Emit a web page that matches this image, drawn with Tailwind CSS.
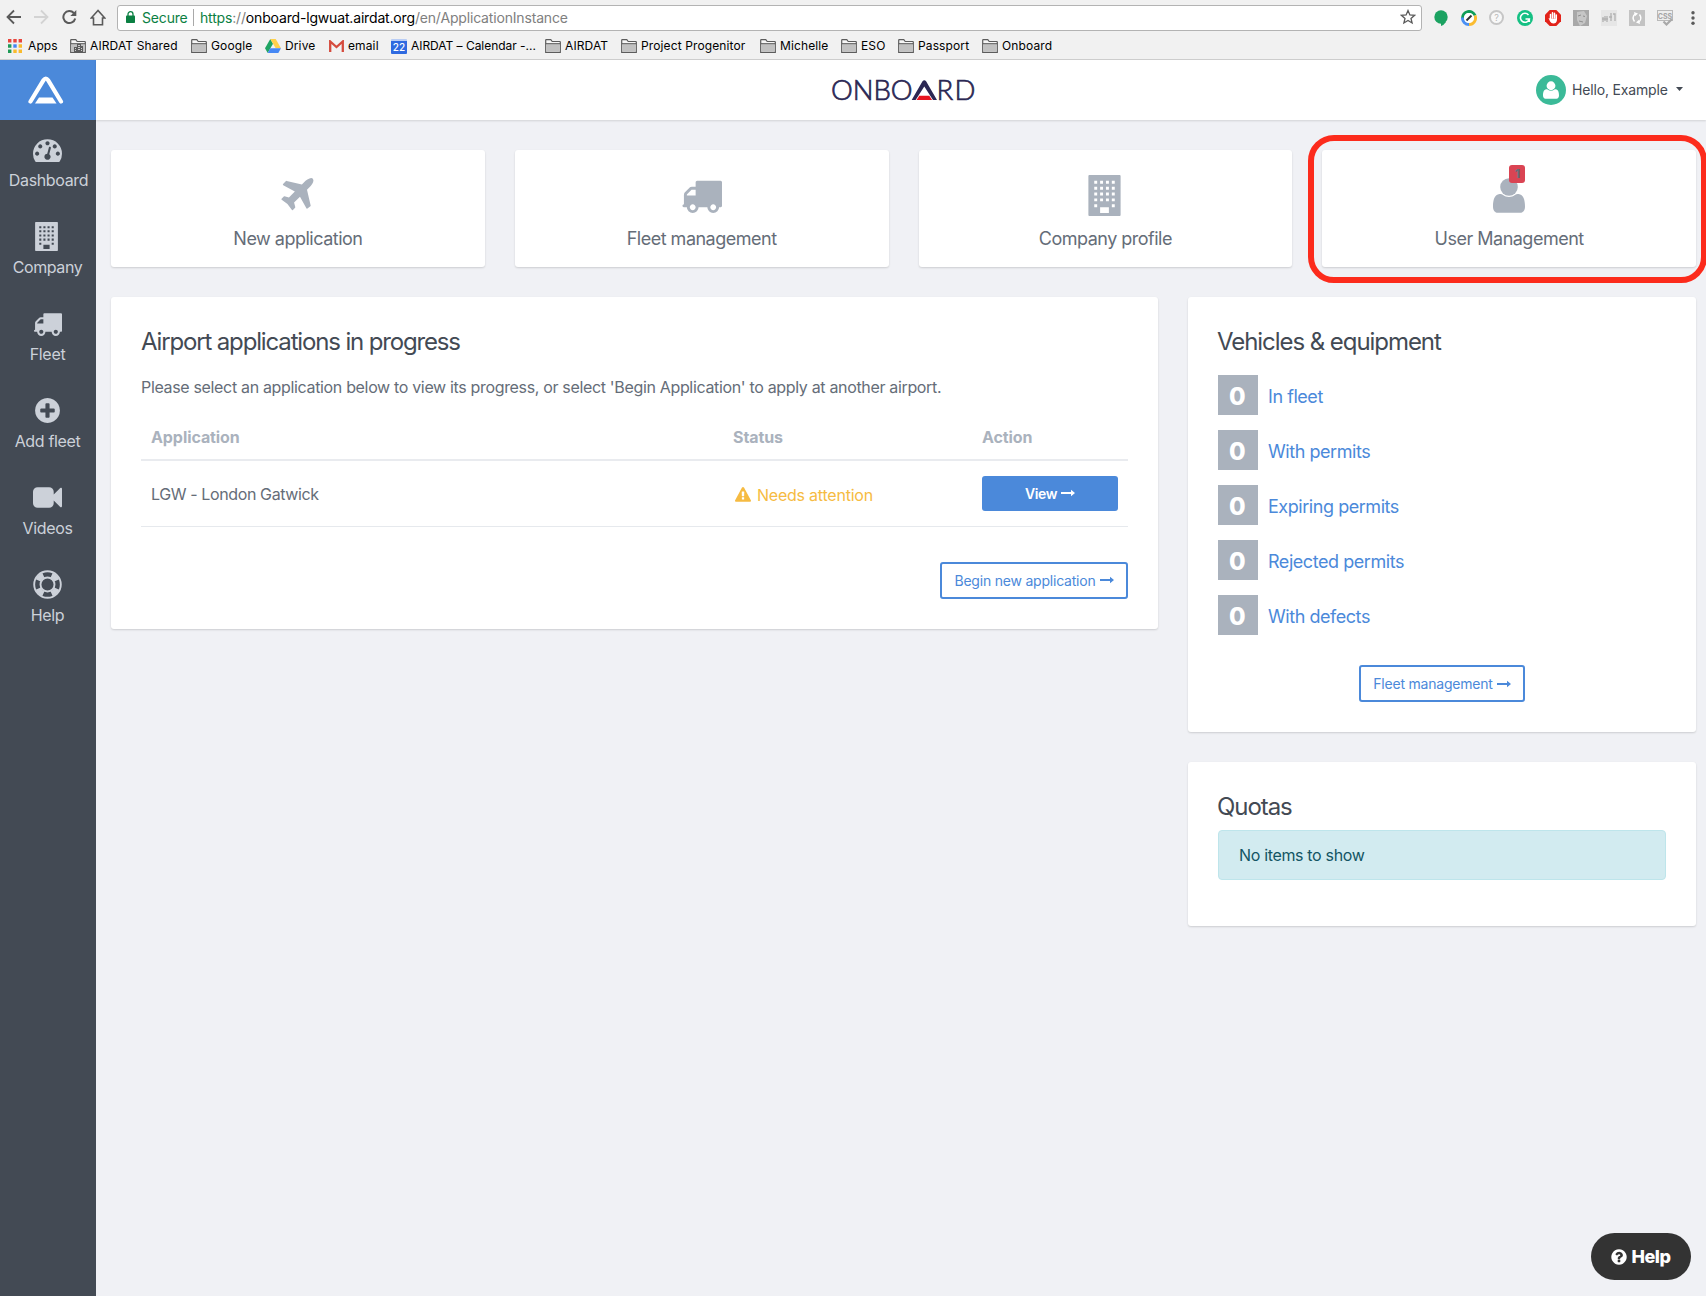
<!DOCTYPE html>
<html lang="en">

<head>
    <meta charset="UTF-8" />
    <meta name="viewport" content="width=device-width, initial-scale=1.0" />
    <title>Onboard</title>
    <script src="https://cdn.jsdelivr.net/npm/@tailwindcss/browser@4"></script>
</head>

<body class="h-[1296px] w-[1706px] overflow-hidden bg-[#f0f1f5] font-['Inter',sans-serif] text-base text-[#656d78]">
    <!-- Shared icons -->
    <svg class="hidden">
        <symbol id="folder" viewBox="0 0 16 14">
            <path d="M.7 13.3V1.2q0-.5.5-.5h4.6l1.4 1.8h7.6q.5 0 .5.5v10.3z" fill="#f6f6f6" stroke="#5c5c5c" stroke-width="1.2" />
            <path d="M1.3 5.2h13.4v7.5H1.3z" fill="#c1c1c1" />
            <path d="M.7 4.7h14.6" stroke="#5c5c5c" stroke-width="1.1" />
        </symbol>
        <symbol id="building" viewBox="0 0 33 42">
            <path fill="currentColor" fill-rule="evenodd" d="M1 0h31q1 0 1 1v40q0 1-1 1H1q-1 0-1-1V1q0-1 1-1zM6 6v3h3V6zM12 6v3h3V6zM18 6v3h3V6zM24 6v3h3V6zM6 12v3h3v-3zM12 12v3h3v-3zM18 12v3h3v-3zM24 12v3h3v-3zM6 18v3h3v-3zM12 18v3h3v-3zM18 18v3h3v-3zM24 18v3h3v-3zM6 24v3h3v-3zM12 24v3h3v-3zM18 24v3h3v-3zM24 24v3h3v-3zM6 30v3h3v-3zM24 30v3h3v-3zM12 33v6h9v-6z" />
        </symbol>
        <symbol id="truck" viewBox="0 0 1792 1792">
            <path fill="currentColor" d="M640 1408q0-52-38-90t-90-38-90 38-38 90 38 90 90 38 90-38 38-90zm-384-512h384v-256h-158q-13 0-22 9l-195 195q-9 9-9 22v30zm1280 512q0-52-38-90t-90-38-90 38-38 90 38 90 90 38 90-38 38-90zm256-1088v1024q0 15-4 26.5t-13.5 18.5-16.5 11.5-23.5 6-22.5 2-25.5 0-22.5-.5q0 106-75 181t-181 75-181-75-75-181h-384q0 106-75 181t-181 75-181-75-75-181h-64q-3 0-22.5.5t-25.5 0-22.5-2-23.5-6-16.5-11.5-13.5-18.5-4-26.5q0-26 19-45t45-19v-320q0-8-.5-35t0-38 2.5-34.5 6.5-37 14-30.5 22.5-30l198-198q19-19 50.5-32t58.5-13h160v-192q0-26 19-45t45-19h1024q26 0 45 19t19 45z" />
        </symbol>
        <symbol id="user" viewBox="0 0 32 35">
            <circle cx="16" cy="9" r="8.8" fill="currentColor" />
            <path fill="currentColor" d="M6.5 16C1.5 16.5 0 22 0 28.5C0 32.5 2 34.8 5 34.8H27C30 34.8 32 32.5 32 28.5C32 22 30.5 16.5 25.5 16C24 15.9 23.2 16 22.3 16.8C18.5 19.7 13.5 19.7 9.7 16.8C8.8 16 8 15.9 6.5 16Z" />
        </symbol>
        <symbol id="arrow" viewBox="0 0 14 8">
            <path fill="currentColor" d="M0 3.1h10V.8L14 4l-4 3.2V4.9H0z" />
        </symbol>
    </svg>

    <!-- Browser chrome -->
    <div class="h-[60px] border-b border-[#cfcfcf] bg-[#f1f1f1] text-black">
        <div class="flex h-[35px] items-center pl-[6px] pt-px">
            <div class="flex w-[111px] items-center gap-[13px] pb-0.5">
                <svg class="h-4 w-[15px]" viewBox="0 0 15 16" fill="none" stroke="#5a5a5a" stroke-width="1.8"><path d="M15 8H1.5M8 1.5L1.5 8L8 14.5" /></svg>
                <svg class="h-4 w-[15px]" viewBox="0 0 15 16" fill="none" stroke="#d3d3d3" stroke-width="1.8"><path d="M0 8H13.5M7 1.5L13.5 8L7 14.5" /></svg>
                <svg class="h-4 w-[15px]" viewBox="0 0 15 16"><path d="M13.2 9.5A6 6 0 1 1 11.8 4" fill="none" stroke="#5a5a5a" stroke-width="2" /><path d="M14.3 1v6H8.3z" fill="#5a5a5a" /></svg>
                <svg class="h-[17px] w-4" viewBox="0 0 16 17" fill="none" stroke="#5a5a5a" stroke-width="1.6"><path d="M8 1.5L1.2 9H3.5V15.7H12.5V9H14.8Z" /></svg>
            </div>
            <div class="flex h-[26px] w-[1305px] items-center rounded-[3px] border border-[#b3b3b3] bg-white pb-0.5 pl-2 text-[14px] tracking-[-0.012em]">
                <svg class="h-[12px] w-[9px]" viewBox="0 0 9 12"><path d="M2 5V3.2a2.5 2.5 0 0 1 5 0V5" fill="none" stroke="#0b8043" stroke-width="1.3" /><rect y="4.5" width="9" height="7.5" rx=".8" fill="#0b8043" /></svg>
                <span class="ml-[7px] w-[51px] text-[#0b8043]">Secure</span>
                <span class="mr-[6px] h-[17px] w-px bg-[#a9a9a9]"></span>
                <span class="text-[#808080]"><span class="text-[#0b8043]">https</span>://<span class="text-black">onboard-lgwuat.airdat.org</span>/en/ApplicationInstance</span>
                <svg class="ml-auto mr-[5px] size-4" viewBox="0 0 16 16"><path d="M8 1.5l1.9 4.4 4.7.4-3.6 3.1 1.1 4.6L8 11.5 3.9 14 5 9.4 1.4 6.3l4.7-.4z" fill="none" stroke="#5a5a5a" stroke-width="1.3" /></svg>
            </div>
            <div class="ml-[11px] flex items-center gap-3 pb-px">
                <svg class="size-4" viewBox="0 0 16 16"><circle cx="8" cy="7" r="6.7" fill="#1ba261" /><path d="M8 12h5q-2 3-5 4z" fill="#1ba261" /></svg>
                <svg class="size-4" viewBox="0 0 16 16"><g fill="none" stroke-width="3"><path d="M1.5 8A6.5 6.5 0 0 1 14 5.5" stroke="#0f9d58" /><path d="M14 5.5A6.5 6.5 0 0 1 8 14.5" stroke="#fbbc30" /><path d="M8 14.5A6.5 6.5 0 0 1 1.5 7.5" stroke="#4a90f5" /></g><circle cx="8" cy="8" r="5" fill="#fff" /><path d="M5.5 10.5L10.5 5.5" stroke="#333" stroke-width="2" /></svg>
                <div class="mr-px flex size-[15px] items-center justify-center rounded-full border-2 border-[#c6c6c6] bg-[#f8f8f8] text-[9px] text-[#b8b8b8]">?</div>
                <svg class="size-4" viewBox="0 0 16 16"><circle cx="8" cy="8" r="8" fill="#15c083" /><path d="M11.5 5A4.5 4.5 0 1 0 12.3 9H8.5M12.3 8.5V12" fill="none" stroke="#fff" stroke-width="1.6" /></svg>
                <svg class="size-4" viewBox="0 0 16 16"><path d="M4.7 0h6.6L16 4.7v6.6L11.3 16H4.7L0 11.3V4.7z" fill="#e2231a" /><path d="M5.5 9V4.5M7.5 8V2.8M9.5 8V3.3M11.3 9V5" stroke="#fff" stroke-width="1.5" stroke-linecap="round" /><path d="M3.5 8l1.5.5h7v1.5q-.5 3.5-3.7 3.5-2 0-3.2-2z" fill="#fff" /></svg>
                <svg class="size-4" viewBox="0 0 16 16"><rect width="16" height="16" fill="#a8a8a8" /><path d="M4 2l7-1 3 5-2 7-5 3-3-6z" fill="#c6c6c6" /><path d="M5 6l3-1M10 6l2 .5M6 11l4 1" stroke="#8f8f8f" stroke-width="1" /></svg>
                <svg class="size-4" viewBox="0 0 16 16"><rect width="16" height="16" fill="#e6e6e6" /><path d="M2 7v5M4 6v5M6 6v6M10 3v8M12 4h2v7M8 7h3M1 9h6" stroke="#b2b2b2" stroke-width="1.3" fill="none" /></svg>
                <svg class="size-4" viewBox="0 0 16 16"><rect width="16" height="16" fill="#c3c3c3" /><path d="M6 4Q2.5 7.5 5.5 11.5M10 12Q13.5 8.5 10.5 4.5" fill="none" stroke="#fff" stroke-width="1.4" /><path d="M5 2l4 1.5-3 2.7zM11 14l-4-1.5 3-2.7z" fill="#fff" /></svg>
                <svg class="size-4" viewBox="0 0 16 16"><rect x=".5" y=".5" width="15" height="10" fill="#ededed" stroke="#b9b9b9" /><text x="8" y="8.5" font-size="7" font-weight="700" text-anchor="middle" fill="#a5a5a5" class="font-['Inter']">CSS</text><path d="M6.5 11.5l3 3L15 9" stroke="#a9a9a9" stroke-width="2.2" fill="none" /></svg>
                <svg class="size-4" viewBox="0 0 16 16" fill="#5a5a5a"><circle cx="8" cy="2.8" r="1.7" /><circle cx="8" cy="8" r="1.7" /><circle cx="8" cy="13.2" r="1.7" /></svg>
            </div>
        </div>
        <!-- Bookmarks -->
        <div class="flex h-[22px] items-center whitespace-nowrap pl-2 text-[12px] tracking-[0.01em]">
            <div class="flex w-[62px] items-center gap-[6px]">
                <svg class="size-[14px]" viewBox="0 0 14 14"><path fill="#e8453c" d="M0 0h3.4v3.4H0zM5.3 0h3.4v3.4H5.3zM10.6 0H14v3.4h-3.4z" /><path fill="#1e9a57" d="M0 5.3h3.4v3.4H0zM0 10.6h3.4V14H0z" /><path fill="#4285f4" d="M5.3 5.3h3.4v3.4H5.3z" /><path fill="#f9bb2d" d="M10.6 5.3H14v3.4h-3.4zM5.3 10.6h3.4V14H5.3zM10.6 10.6H14V14h-3.4z" /></svg>
                <span>Apps</span>
            </div>
            <div class="flex w-[121px] items-center gap-1">
                <div class="relative"><svg class="h-[14px] w-4"><use href="#folder" /></svg><svg class="absolute left-1 top-[5px] h-[8px] w-[9px]" viewBox="0 0 9 8"><path d="M0 8V3h3V0h4v2h2v6z" fill="#5c5c5c" /><path d="M1 4.5h1M4 1.5h2M4 3.5h2M4 5.5h2M7 4.5h1M7 6.5h1M1 6.5h1" stroke="#ddd" stroke-width=".9" /></svg></div>
                <span>AIRDAT Shared</span>
            </div>
            <div class="flex w-[74px] items-center gap-1"><svg class="h-[14px] w-4"><use href="#folder" /></svg><span>Google</span></div>
            <div class="flex w-[64px] items-center gap-1">
                <svg class="h-[14px] w-4" viewBox="0 0 16 14"><path d="M5.3 0L0 9.3 2.7 14 8 4.7z" fill="#1fa463" /><path d="M5.3 0h5.4L16 9.3h-5.3z" fill="#ffd04b" /><path d="M5.3 9.3H16L13.3 14H2.7z" fill="#4688f4" /></svg>
                <span>Drive</span>
            </div>
            <div class="flex w-[62px] items-center gap-1">
                <svg class="h-[12px] w-[15px]" viewBox="0 0 15 12"><rect width="15" height="12" rx="1" fill="#f2f2f2" /><path d="M1.2 12V1.5L7.5 7l6.3-5.5V12" fill="none" stroke="#d54b3d" stroke-width="2.3" /></svg>
                <span>email</span>
            </div>
            <div class="flex w-[154px] items-center gap-1">
                <div class="flex h-[15px] w-4 items-center justify-center rounded-[1px] border-t-2 border-[#b9cdf5] bg-[#2f6ae0] text-[10px] font-medium text-white">22</div>
                <span class="tracking-[-0.003em]">AIRDAT – Calendar -...</span>
            </div>
            <div class="flex w-[76px] items-center gap-1"><svg class="h-[14px] w-4"><use href="#folder" /></svg><span>AIRDAT</span></div>
            <div class="flex w-[139px] items-center gap-1"><svg class="h-[14px] w-4"><use href="#folder" /></svg><span>Project Progenitor</span></div>
            <div class="flex w-[81px] items-center gap-1"><svg class="h-[14px] w-4"><use href="#folder" /></svg><span>Michelle</span></div>
            <div class="flex w-[57px] items-center gap-1"><svg class="h-[14px] w-4"><use href="#folder" /></svg><span>ESO</span></div>
            <div class="flex w-[84px] items-center gap-1"><svg class="h-[14px] w-4"><use href="#folder" /></svg><span>Passport</span></div>
            <div class="flex items-center gap-1"><svg class="h-[14px] w-4"><use href="#folder" /></svg><span>Onboard</span></div>
        </div>
    </div>

    <div class="flex h-[1236px]">
        <!-- Sidebar -->
        <nav class="w-24 shrink-0 bg-[#434a54] text-[#ccd1d9]">
            <a href="#" class="flex h-[60px] items-center bg-[#4b89da] pl-[28px]">
                <svg class="h-[28px] w-[36px]" viewBox="0 0 36 28"><path d="M2.5 25.5L15.5 4.2Q17.8 .8 20.1 4.2L33 25.5" fill="none" stroke="#fff" stroke-width="4.2" stroke-linecap="round" /><path d="M11 21.5H24.5L28.5 27.5H7z" fill="#fff" /></svg>
            </a>
            <a href="#" class="flex h-[87px] flex-col items-center pt-[15px] pr-px">
                <svg class="size-[29px]" viewBox="0 0 1792 1792"><path fill="currentColor" d="M384 1152q0-53-37.5-90.5t-90.5-37.5-90.5 37.5-37.5 90.5 37.5 90.5 90.5 37.5 90.5-37.5 37.5-90.5zm192-448q0-53-37.5-90.5t-90.5-37.5-90.5 37.5-37.5 90.5 37.5 90.5 90.5 37.5 90.5-37.5 37.5-90.5zm428 481l101-382q6-26-7.5-48.5t-38.5-29.5-48 6.5-30 39.5l-101 382q-60 5-107 43.5t-63 98.5q-20 77 20 146t117 89 146-20 89-117q16-60-6-117t-72-91zm660-33q0-53-37.5-90.5t-90.5-37.5-90.5 37.5-37.5 90.5 37.5 90.5 90.5 37.5 90.5-37.5 37.5-90.5zm-640-640q0-53-37.5-90.5t-90.5-37.5-90.5 37.5-37.5 90.5 37.5 90.5 90.5 37.5 90.5-37.5 37.5-90.5zm448 192q0-53-37.5-90.5t-90.5-37.5-90.5 37.5-37.5 90.5 37.5 90.5 90.5 37.5 90.5-37.5 37.5-90.5zm320 448q0 261-141 483-19 29-54 29h-1402q-35 0-54-29-141-221-141-483 0-182 71-348t191-286 286-191 348-71 348 71 286 191 191 286 71 348z" /></svg>
                <span class="ml-[2px] mt-1 tracking-[-0.022em]">Dashboard</span>
            </a>
            <a href="#" class="flex h-[87px] flex-col items-center pt-[15px] pr-px">
                <svg class="mr-[2px] h-[29px] w-[23px]"><use href="#building" /></svg>
                <span class="mt-1 tracking-[-0.025em]">Company</span>
            </a>
            <a href="#" class="flex h-[87px] flex-col items-center pt-[15px] pr-px">
                <svg class="size-[29px]"><use href="#truck" /></svg>
                <span class="mt-1 tracking-[-0.02em]">Fleet</span>
            </a>
            <a href="#" class="flex h-[87px] flex-col items-center pt-[15px] pr-px">
                <svg class="size-[29px]" viewBox="0 0 1792 1792"><path fill="currentColor" d="M1344 960v-128q0-26-19-45t-45-19h-256v-256q0-26-19-45t-45-19h-128q-26 0-45 19t-19 45v256h-256q-26 0-45 19t-19 45v128q0 26 19 45t45 19h256v256q0 26 19 45t45 19h128q26 0 45-19t19-45v-256h256q26 0 45-19t19-45zm320-64q0 209-103 385.5t-279.5 279.5-385.5 103-385.5-103-279.5-279.5-103-385.5 103-385.5 279.5-279.5 385.5-103 385.5 103 279.5 279.5 103 385.5z" /></svg>
                <span class="mt-1 tracking-[-0.022em]">Add fleet</span>
            </a>
            <a href="#" class="flex h-[87px] flex-col items-center pt-[15px] pr-px">
                <svg class="size-[29px]" viewBox="0 0 1792 1792"><path fill="currentColor" d="M1792 352v1088q0 42-39 59-13 5-25 5-27 0-45-19l-403-403v166q0 119-84.5 203.5t-203.5 84.5h-704q-119 0-203.5-84.5t-84.5-203.5v-704q0-119 84.5-203.5t203.5-84.5h704q119 0 203.5 84.5t84.5 203.5v165l403-402q18-19 45-19 12 0 25 5 39 17 39 59z" /></svg>
                <span class="mt-1 tracking-[-0.02em]">Videos</span>
            </a>
            <a href="#" class="flex h-[87px] flex-col items-center pt-[15px] pr-px">
                <svg class="size-[29px]" viewBox="0 0 29 29" fill="none" stroke="currentColor"><circle cx="14.5" cy="14.5" r="13.3" stroke-width="1.9" /><circle cx="14.5" cy="14.5" r="7" stroke-width="1.9" /><circle cx="14.5" cy="14.5" r="10.2" stroke-width="5.5" pathLength="360" stroke-dasharray="42 48" stroke-dashoffset="-24" /></svg>
                <span class="mt-1 tracking-[-0.02em]">Help</span>
            </a>
        </nav>

        <div class="flex-1">
            <!-- Header -->
            <header class="relative flex h-[60px] items-center justify-between bg-white pr-[23px] shadow-[0_1px_2px_rgba(0,0,0,0.13)]">
                <div></div>
                <svg class="ml-[179px] h-10 w-[150px]" viewBox="0 0 150 40" fill="#2b2753">
                    <text x="0" y="30" font-size="27.5" textLength="81.5" font-weight="300" stroke="#2b2753" stroke-width=".7" class="font-['Lato',sans-serif]">ONBO</text>
                    <path d="M80.7 30L91.5 11.3Q93.3 9 95.1 11.3L106 30H102L93.3 16.5L84.600 30z" />
                    <path d="M88.300 25.800h10l2.800 4.200H85.500z" fill="#e8141f" />
                    <text x="105.5" y="30" font-size="27.5" textLength="39" font-weight="300" stroke="#2b2753" stroke-width=".7" class="font-['Lato',sans-serif]">RD</text>
                </svg>
                <div class="flex items-center">
                    <div class="flex size-[30px] items-center justify-center rounded-full bg-[#3bba98]">
                        <svg class="h-[18px] w-4 text-white"><use href="#user" /></svg>
                    </div>
                    <span class="ml-[6px] w-[95px] whitespace-nowrap pb-px text-[14px] tracking-[-0.012em] text-[#434a54]">Hello, Example</span>
                    <svg class="mb-0.5 ml-[9px] h-1 w-[7px]" viewBox="0 0 7 4"><path d="M0 0h7L3.5 4z" fill="#434a54" /></svg>
                </div>
            </header>

            <main class="pb-6 pl-[15px] pr-[10px] pt-[30px]">
                <!-- Shortcuts -->
                <div class="grid grid-cols-4 gap-[30px] text-lg/6 tracking-[-0.028em]">
                    <a href="#" class="flex h-[117px] flex-col items-center rounded-[3px] bg-white pt-[25px] shadow-[0_1px_2px_rgba(0,0,0,0.15)]">
                        <svg class="size-[41px] text-[#aab2bd]" viewBox="0 0 1792 1792"><path fill="currentColor" d="M1568 160q44 52 12 148t-108 172l-161 161 160 696q5 19-12 33l-128 96q-7 6-19 6-4 0-7-1-15-3-21-16l-279-508-259 259 53 194q5 17-8 31l-96 96q-9 9-23 9h-2q-15-2-24-13l-189-252-252-189q-11-7-13-23-1-13 9-25l96-97q9-9 23-9 6 0 8 1l194 53 259-259-508-279q-14-8-17-24-2-16 9-27l128-128q14-13 30-8l665 159 160-160q76-76 172-108t148 12z" /></svg>
                        <span class="mt-[11px]">New application</span>
                    </a>
                    <a href="#" class="flex h-[117px] flex-col items-center rounded-[3px] bg-white pt-[25px] shadow-[0_1px_2px_rgba(0,0,0,0.15)]">
                        <svg class="size-[41px] text-[#aab2bd]"><use href="#truck" /></svg>
                        <span class="mt-[11px]">Fleet management</span>
                    </a>
                    <a href="#" class="flex h-[117px] flex-col items-center rounded-[3px] bg-white pt-[25px] shadow-[0_1px_2px_rgba(0,0,0,0.15)]">
                        <svg class="mr-[2px] h-[41px] w-[33px] text-[#aab2bd]"><use href="#building" /></svg>
                        <span class="mt-[11px]">Company profile</span>
                    </a>
                    <a href="#" class="relative flex h-[117px] flex-col items-center rounded-[3px] bg-white pt-[28px] shadow-[0_1px_2px_rgba(0,0,0,0.15)]">
                        <div class="relative">
                            <svg class="h-[35px] w-8 text-[#aab2bd]"><use href="#user" /></svg>
                            <span class="absolute -top-[13px] right-0 h-[18px] w-4 rounded-[3px] bg-[#da4453] text-center text-[12px]/[18px] font-extrabold">1</span>
                        </div>
                        <span class="mt-[14px]">User Management</span>
                        <!-- Highlight around the card -->
                        <div class="absolute -left-[14px] -top-[15px] h-[148px] w-[399px] rounded-[26px] border-[6px] border-[#fc2b1c]"></div>
                    </a>
                </div>

                <div class="mt-[30px] flex items-start gap-[30px]">
                    <!-- Applications -->
                    <section class="h-[332px] w-[1047px] rounded-[3px] bg-white px-[30px] pt-[30px] shadow-[0_1px_2px_rgba(0,0,0,0.15)]">
                        <h2 class="text-2xl/[29px] tracking-[-0.048em] text-[#434a54]">Airport applications in progress</h2>
                        <p class="mt-[19px] tracking-[-0.021em]">Please select an application below to view its progress, or select 'Begin Application' to apply at another airport.</p>
                        <table class="mt-[14px] w-full table-fixed tracking-[-0.014em]">
                            <thead>
                                <tr class="h-[47px] border-b-2 border-[#e9ebef] text-left tracking-[-0.005em] text-[#aab2bd]">
                                    <th class="w-[582px] px-[10px] pt-0.5 font-bold">Application</th>
                                    <th class="w-[249px] px-[10px] pt-0.5 font-bold">Status</th>
                                    <th class="px-[10px] pt-0.5 font-bold">Action</th>
                                </tr>
                            </thead>
                            <tbody>
                                <tr class="h-[66px] border-b border-[#e6e9ed]">
                                    <td class="px-[10px] pt-px tracking-[-0.024em]">LGW - London Gatwick</td>
                                    <td class="px-[10px] text-[#f6bb42]">
                                        <div class="flex items-center gap-[6px] pl-[2px] pt-[3px]">
                                            <svg class="size-4" viewBox="0 0 1792 1792"><path fill="currentColor" d="M1024 1375v-190q0-14-9.5-23.5t-22.5-9.5h-192q-13 0-22.5 9.5t-9.5 23.5v190q0 14 9.5 23.5t22.5 9.5h192q13 0 22.5-9.5t9.5-23.5zm-2-374l18-459q0-12-10-19-13-11-24-11h-220q-11 0-24 11-10 7-10 21l17 457q0 10 10 16.5t24 6.5h185q14 0 23.5-6.5t10.5-16.5zm-14-934l768 1408q35 63-2 126-17 29-46.5 46t-63.5 17h-1536q-34 0-63.5-17t-46.5-46q-37-63-2-126l768-1408q17-31 47-49t65-18 65 18 47 49z" /></svg>
                                            Needs attention
                                        </div>
                                    </td>
                                    <td class="px-[10px]">
                                        <a href="#" class="flex h-[35px] items-center justify-center gap-1 rounded-[3px] bg-[#4b89da] text-[14px] font-semibold tracking-[-0.03em] text-white">View <svg class="h-2 w-[14px]"><use href="#arrow" /></svg></a>
                                    </td>
                                </tr>
                            </tbody>
                        </table>
                        <div class="mt-[35px] flex justify-end">
                            <a href="#" class="flex h-[37px] w-[188px] items-center justify-center gap-1 whitespace-nowrap rounded-[3px] border-2 border-[#4b89da] text-[14px] tracking-[-0.015em] text-[#4b89da]">Begin new application <svg class="h-2 w-[14px]"><use href="#arrow" /></svg></a>
                        </div>
                    </section>

                    <div class="flex w-[508px] flex-col gap-[30px]">
                        <!-- Vehicles -->
                        <section class="h-[435px] rounded-[3px] bg-white px-[30px] pt-[30px] shadow-[0_1px_2px_rgba(0,0,0,0.15)]">
                            <h2 class="-ml-px text-2xl/[29px] tracking-[-0.044em] text-[#434a54]">Vehicles &amp; equipment</h2>
                            <ul class="mt-[19px] space-y-[15px] text-lg tracking-[-0.025em] text-[#4b89da]">
                                <li class="flex items-center gap-[10px]"><span class="flex size-10 items-center justify-center bg-[#aab2bd] pr-0.5 pt-[3px] text-2xl font-extrabold text-white">0</span><a href="#" class="pt-[3px]">In fleet</a></li>
                                <li class="flex items-center gap-[10px]"><span class="flex size-10 items-center justify-center bg-[#aab2bd] pr-0.5 pt-[3px] text-2xl font-extrabold text-white">0</span><a href="#" class="pt-[3px]">With permits</a></li>
                                <li class="flex items-center gap-[10px]"><span class="flex size-10 items-center justify-center bg-[#aab2bd] pr-0.5 pt-[3px] text-2xl font-extrabold text-white">0</span><a href="#" class="pt-[3px]">Expiring permits</a></li>
                                <li class="flex items-center gap-[10px]"><span class="flex size-10 items-center justify-center bg-[#aab2bd] pr-0.5 pt-[3px] text-2xl font-extrabold text-white">0</span><a href="#" class="pt-[3px]">Rejected permits</a></li>
                                <li class="flex items-center gap-[10px]"><span class="flex size-10 items-center justify-center bg-[#aab2bd] pr-0.5 pt-[3px] text-2xl font-extrabold text-white">0</span><a href="#" class="pt-[3px]">With defects</a></li>
                            </ul>
                            <div class="mt-[30px] flex justify-center">
                                <a href="#" class="flex h-[37px] w-[166px] items-center justify-center gap-1 whitespace-nowrap rounded-[3px] border-2 border-[#4b89da] text-[14px] tracking-[-0.015em] text-[#4b89da]">Fleet management <svg class="h-2 w-[14px]"><use href="#arrow" /></svg></a>
                            </div>
                        </section>

                        <!-- Quotas -->
                        <section class="h-[164px] rounded-[3px] bg-white px-[30px] pt-[30px] shadow-[0_1px_2px_rgba(0,0,0,0.15)]">
                            <h2 class="-ml-px text-2xl/[29px] tracking-[-0.044em] text-[#434a54]">Quotas</h2>
                            <div class="mt-[9px] flex h-[50px] items-center rounded border border-[#bee5eb] bg-[#d2ebf0] pl-5 tracking-[-0.021em] text-[#135564]">No items to show</div>
                        </section>
                    </div>
                </div>
            </main>
        </div>
    </div>

    <!-- Help launcher -->
    <button class="fixed bottom-4 right-[15px] flex h-[47px] w-[100px] items-center justify-center gap-[3px] rounded-full bg-[#333] pr-px text-lg font-extrabold tracking-[-0.025em] text-white">
        <svg class="size-[18px]" viewBox="0 0 1792 1792"><path fill="currentColor" d="M1024 1376v-192q0-14-9-23t-23-9h-192q-14 0-23 9t-9 23v192q0 14 9 23t23 9h192q14 0 23-9t9-23zm256-672q0-88-55.5-163t-138.5-116-170-41q-243 0-371 213-15 24 8 42l132 100q7 6 19 6 16 0 25-12 53-68 86-92 34-24 86-24 48 0 85.5 26t37.5 59q0 38-20 61t-68 45q-63 28-115.5 86.5t-52.5 125.5v36q0 14 9 23t23 9h192q14 0 23-9t9-23q0-19 21.5-49.5t54.5-49.5q32-18 49-28.5t46-35 44.5-48 28-60.5 12.5-81zm384 192q0 209-103 385.5t-279.5 279.5-385.5 103-385.5-103-279.5-279.5-103-385.5 103-385.5 279.5-279.5 385.5-103 385.5 103 279.5 279.5 103 385.5z" /></svg>
        Help
    </button>
</body>

</html>
